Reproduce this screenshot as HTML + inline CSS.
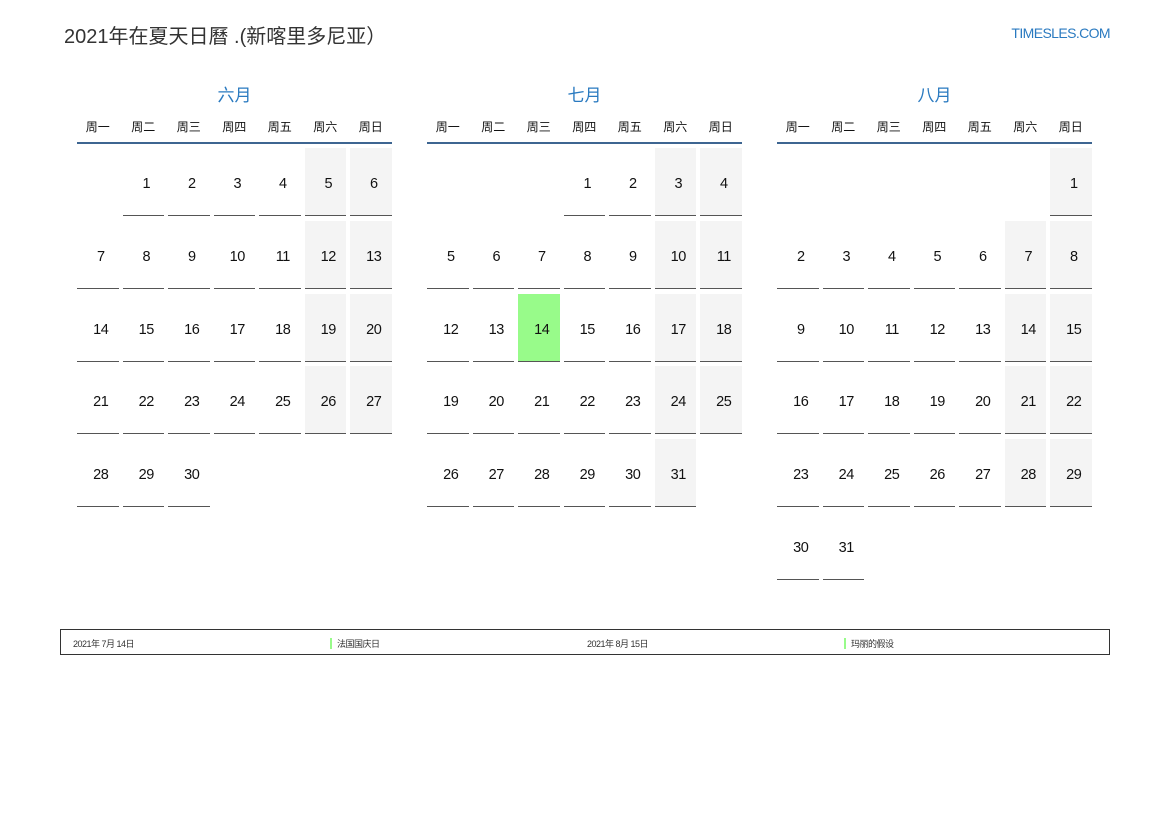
<!DOCTYPE html>
<html><head><meta charset="utf-8">
<style>
*{margin:0;padding:0;box-sizing:border-box}
body{width:1169px;height:827px;background:#fff;position:relative;overflow:hidden;font-family:"Liberation Sans","Noto Sans CJK SC",sans-serif;color:#111}
.title{position:absolute;left:64px;top:20px;font-size:20px;color:#333;letter-spacing:0}
.site{position:absolute;right:59px;top:25px;font-size:14px;color:#2a7ac0;letter-spacing:-0.6px}
.m{position:absolute;top:84px;width:315px}
.mt{text-align:center;font-size:17px;color:#2a7ac0;height:24px;line-height:24px}
.wd{display:grid;grid-template-columns:repeat(7,41.5px);column-gap:4px;margin-top:11px;height:23px;font-size:12px;text-align:center;line-height:16px}
.hl{height:2px;background:#3d6591;margin-top:0}
.g{display:grid;grid-template-columns:repeat(7,41.5px);column-gap:4px;row-gap:4.8px;margin-top:4px}
.c{height:68px;border-bottom:1.5px solid #555;font-size:14.5px;line-height:72px;text-align:center;padding-left:6px;letter-spacing:-0.5px}
.c.e{border:none}
.g .c:not(.e):nth-child(7n+6),.g .c:not(.e):nth-child(7n){background:#f4f4f4}
.g .c.h{background:#98fb8a}
.leg{position:absolute;left:60px;top:629px;width:1050px;height:26px;border:1.5px solid #333;font-size:9px;color:#333;letter-spacing:-0.5px}
.leg span{position:absolute;top:7px}
.bar{display:inline-block;width:2px;height:11px;background:#98fb8a;vertical-align:-2px;margin-right:5px}
</style></head><body>
<div class="title">2021年在夏天日曆 .(新喀里多尼亚）</div>
<div class="site">TIMESLES.COM</div>

<div class="m" style="left:77px">
<div class="mt">六月</div>
<div class="wd"><div>周一</div><div>周二</div><div>周三</div><div>周四</div><div>周五</div><div>周六</div><div>周日</div></div>
<div class="hl"></div>
<div class="g">
<div class="c e"></div><div class="c">1</div><div class="c">2</div><div class="c">3</div><div class="c">4</div><div class="c">5</div><div class="c">6</div>
<div class="c">7</div><div class="c">8</div><div class="c">9</div><div class="c">10</div><div class="c">11</div><div class="c">12</div><div class="c">13</div>
<div class="c">14</div><div class="c">15</div><div class="c">16</div><div class="c">17</div><div class="c">18</div><div class="c">19</div><div class="c">20</div>
<div class="c">21</div><div class="c">22</div><div class="c">23</div><div class="c">24</div><div class="c">25</div><div class="c">26</div><div class="c">27</div>
<div class="c">28</div><div class="c">29</div><div class="c">30</div>
</div></div>

<div class="m" style="left:427px">
<div class="mt">七月</div>
<div class="wd"><div>周一</div><div>周二</div><div>周三</div><div>周四</div><div>周五</div><div>周六</div><div>周日</div></div>
<div class="hl"></div>
<div class="g">
<div class="c e"></div><div class="c e"></div><div class="c e"></div><div class="c">1</div><div class="c">2</div><div class="c">3</div><div class="c">4</div>
<div class="c">5</div><div class="c">6</div><div class="c">7</div><div class="c">8</div><div class="c">9</div><div class="c">10</div><div class="c">11</div>
<div class="c">12</div><div class="c">13</div><div class="c h">14</div><div class="c">15</div><div class="c">16</div><div class="c">17</div><div class="c">18</div>
<div class="c">19</div><div class="c">20</div><div class="c">21</div><div class="c">22</div><div class="c">23</div><div class="c">24</div><div class="c">25</div>
<div class="c">26</div><div class="c">27</div><div class="c">28</div><div class="c">29</div><div class="c">30</div><div class="c">31</div>
</div></div>

<div class="m" style="left:777px">
<div class="mt">八月</div>
<div class="wd"><div>周一</div><div>周二</div><div>周三</div><div>周四</div><div>周五</div><div>周六</div><div>周日</div></div>
<div class="hl"></div>
<div class="g">
<div class="c e"></div><div class="c e"></div><div class="c e"></div><div class="c e"></div><div class="c e"></div><div class="c e"></div><div class="c">1</div>
<div class="c">2</div><div class="c">3</div><div class="c">4</div><div class="c">5</div><div class="c">6</div><div class="c">7</div><div class="c">8</div>
<div class="c">9</div><div class="c">10</div><div class="c">11</div><div class="c">12</div><div class="c">13</div><div class="c">14</div><div class="c h">15</div>
<div class="c">16</div><div class="c">17</div><div class="c">18</div><div class="c">19</div><div class="c">20</div><div class="c">21</div><div class="c">22</div>
<div class="c">23</div><div class="c">24</div><div class="c">25</div><div class="c">26</div><div class="c">27</div><div class="c">28</div><div class="c">29</div>
<div class="c">30</div><div class="c">31</div>
</div></div>

<div class="leg">
<span style="left:12px">2021年 7月 14日</span>
<span style="left:269px"><i class="bar"></i>法国国庆日</span>
<span style="left:526px">2021年 8月 15日</span>
<span style="left:783px"><i class="bar"></i>玛丽的假设</span>
</div>
</body></html>
